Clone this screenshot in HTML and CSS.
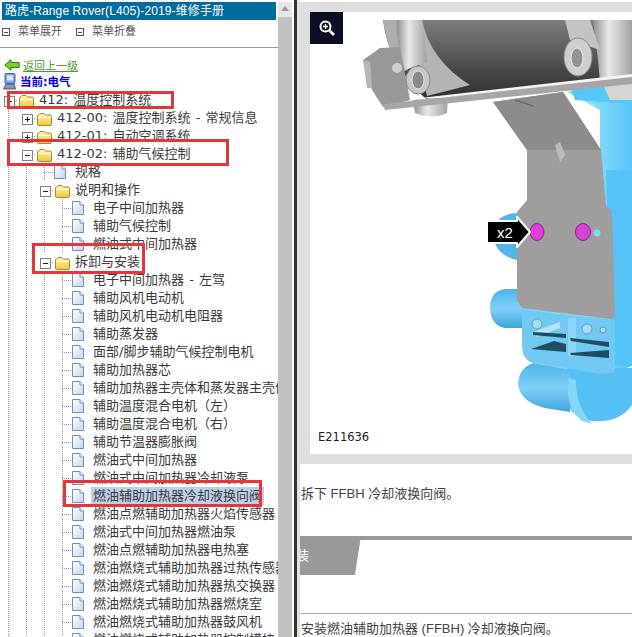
FILE: index.html
```html
<!DOCTYPE html>
<html lang="en">

<head>
    <meta charset="UTF-8">
    <title>路虎-Range Rover(L405)-2019-维修手册</title>
    <link rel="stylesheet" href="styles.css">
</head>

<body>
    <!-- Shared tree icons -->
    <svg class="defs" width="0" height="0">
        <defs>
            <linearGradient id="folderFill" x1="0" y1="0" x2="0" y2="1">
                <stop offset="0" stop-color="#fff6b8" />
                <stop offset="1" stop-color="#f2c63c" />
            </linearGradient>
            <linearGradient id="pageFill" x1="0" y1="0" x2="1" y2="1">
                <stop offset="0" stop-color="#ffffff" />
                <stop offset="1" stop-color="#c4d6f2" />
            </linearGradient>
            <symbol id="folder" viewBox="0 0 16 14">
                <path d="M1.5 12.5 V4 Q1.5 3 2.5 3 L4 1.5 H8 L9.5 3 H14 Q15.5 3 15.5 4.5 V12 Q15.5 13.5 14 13.5 H2.5 Q1.5 13.5 1.5 12.5 Z" fill="url(#folderFill)" stroke="#a88a2a" />
                <path d="M2 5.5 H15" stroke="#fffbe0" fill="none" />
            </symbol>
            <symbol id="page" viewBox="0 0 12 14">
                <path d="M.5 .5 H8 L11.5 4 V13.5 H.5 Z" fill="url(#pageFill)" stroke="#6f8fc4" />
                <path d="M8 .5 V4 H11.5" fill="#fff" stroke="#6f8fc4" />
            </symbol>
        </defs>
    </svg>

    <div class="layout">
        <!-- Left menu -->
        <div class="sidebar">
            <div class="title">路虎-Range Rover(L405)-2019-维修手册</div>
            <div class="menu-tools">
                <span class="tool"><i class="tool-icon"></i>菜单展开</span>
                <span class="tool"><i class="tool-icon"></i>菜单折叠</span>
            </div>
            <div class="back">
                <svg class="back-icon" width="16" height="12" viewBox="0 0 16 12">
                    <path d="M.8 6 L7 .8 V3.5 H15.2 V8.5 H7 V11.2 Z" fill="#7ed321" stroke="#2f7d12" />
                </svg>
                <a href="#">返回上一级</a>
            </div>
            <div class="current">
                <svg class="current-icon" width="13" height="17" viewBox="0 0 13 17">
                    <rect x="2" y="0.5" width="10" height="10" rx="1" fill="#7fa6e8" stroke="#3c62b0" />
                    <rect x="4" y="2.5" width="6" height="5" fill="#dbe9ff" />
                    <path d="M0.5 16 L3 11 H11 L12.5 16 Z" fill="#8d97ad" stroke="#4e5870" />
                </svg>
                当前:电气
            </div>

            <div class="tree">
                <div class="row lv0"><i class="tog plus"></i><svg class="ico"><use href="#folder" /></svg><span class="lbl">412: 温度控制系统</span></div>
                <div class="row lv1"><i class="tog plus"></i><svg class="ico"><use href="#folder" /></svg><span class="lbl">412-00: 温度控制系统 - 常规信息</span></div>
                <div class="row lv1"><i class="tog plus"></i><svg class="ico"><use href="#folder" /></svg><span class="lbl">412-01: 自动空调系统</span></div>
                <div class="row lv1"><i class="tog"></i><svg class="ico"><use href="#folder" /></svg><span class="lbl">412-02: 辅助气候控制</span></div>
                <div class="row lv2"><i class="join"></i><svg class="ico doc"><use href="#page" /></svg><span class="lbl">规格</span></div>
                <div class="row lv2"><i class="tog"></i><svg class="ico"><use href="#folder" /></svg><span class="lbl">说明和操作</span></div>
                <div class="row lv3"><i class="join"></i><svg class="ico doc"><use href="#page" /></svg><span class="lbl">电子中间加热器</span></div>
                <div class="row lv3"><i class="join"></i><svg class="ico doc"><use href="#page" /></svg><span class="lbl">辅助气候控制</span></div>
                <div class="row lv3"><i class="join"></i><svg class="ico doc"><use href="#page" /></svg><span class="lbl">燃油式中间加热器</span></div>
                <div class="row lv2"><i class="tog"></i><svg class="ico"><use href="#folder" /></svg><span class="lbl">拆卸与安装</span></div>
                <div class="row lv3"><i class="join"></i><svg class="ico doc"><use href="#page" /></svg><span class="lbl">电子中间加热器 - 左驾</span></div>
                <div class="row lv3"><i class="join"></i><svg class="ico doc"><use href="#page" /></svg><span class="lbl">辅助风机电动机</span></div>
                <div class="row lv3"><i class="join"></i><svg class="ico doc"><use href="#page" /></svg><span class="lbl">辅助风机电动机电阻器</span></div>
                <div class="row lv3"><i class="join"></i><svg class="ico doc"><use href="#page" /></svg><span class="lbl">辅助蒸发器</span></div>
                <div class="row lv3"><i class="join"></i><svg class="ico doc"><use href="#page" /></svg><span class="lbl">面部/脚步辅助气候控制电机</span></div>
                <div class="row lv3"><i class="join"></i><svg class="ico doc"><use href="#page" /></svg><span class="lbl">辅助加热器芯</span></div>
                <div class="row lv3"><i class="join"></i><svg class="ico doc"><use href="#page" /></svg><span class="lbl">辅助加热器主壳体和蒸发器主壳体</span></div>
                <div class="row lv3"><i class="join"></i><svg class="ico doc"><use href="#page" /></svg><span class="lbl">辅助温度混合电机（左）</span></div>
                <div class="row lv3"><i class="join"></i><svg class="ico doc"><use href="#page" /></svg><span class="lbl">辅助温度混合电机（右）</span></div>
                <div class="row lv3"><i class="join"></i><svg class="ico doc"><use href="#page" /></svg><span class="lbl">辅助节温器膨胀阀</span></div>
                <div class="row lv3"><i class="join"></i><svg class="ico doc"><use href="#page" /></svg><span class="lbl">燃油式中间加热器</span></div>
                <div class="row lv3"><i class="join"></i><svg class="ico doc"><use href="#page" /></svg><span class="lbl">燃油式中间加热器冷却液泵</span></div>
                <div class="row lv3"><i class="join"></i><svg class="ico doc"><use href="#page" /></svg><span class="lbl selected">燃油辅助加热器冷却液换向阀</span></div>
                <div class="row lv3"><i class="join"></i><svg class="ico doc"><use href="#page" /></svg><span class="lbl">燃油点燃辅助加热器火焰传感器</span></div>
                <div class="row lv3"><i class="join"></i><svg class="ico doc"><use href="#page" /></svg><span class="lbl">燃油式中间加热器燃油泵</span></div>
                <div class="row lv3"><i class="join"></i><svg class="ico doc"><use href="#page" /></svg><span class="lbl">燃油点燃辅助加热器电热塞</span></div>
                <div class="row lv3"><i class="join"></i><svg class="ico doc"><use href="#page" /></svg><span class="lbl">燃油燃烧式辅助加热器过热传感器</span></div>
                <div class="row lv3"><i class="join"></i><svg class="ico doc"><use href="#page" /></svg><span class="lbl">燃油燃烧式辅助加热器热交换器</span></div>
                <div class="row lv3"><i class="join"></i><svg class="ico doc"><use href="#page" /></svg><span class="lbl">燃油燃烧式辅助加热器燃烧室</span></div>
                <div class="row lv3"><i class="join"></i><svg class="ico doc"><use href="#page" /></svg><span class="lbl">燃油燃烧式辅助加热器鼓风机</span></div>
                <div class="row lv3"><i class="join"></i><svg class="ico doc"><use href="#page" /></svg><span class="lbl">燃油燃烧式辅助加热器控制模块</span></div>
            </div>

            <!-- Red annotation boxes drawn over the tree -->
            <div class="mark mark-root"></div>
            <div class="mark mark-group"></div>
            <div class="mark mark-remove"></div>
            <div class="mark mark-item"></div>
        </div>

        <!-- Sidebar scrollbar and frame divider -->
        <div class="scrollbar">
            <div class="scroll-up"></div>
            <div class="scroll-track"></div>
        </div>
        <div class="divider"></div>

        <!-- Main content -->
        <div class="content">
            <div class="figure">
                <div class="figure-inner">
                    <svg class="diagram" width="322" height="442" viewBox="310 12 322 442">
                        <defs>
                            <linearGradient id="drum" x1="0" y1="0" x2="0" y2="1">
                                <stop offset="0" stop-color="#7f7d7c" />
                                <stop offset="0.6" stop-color="#4b4a49" />
                                <stop offset="1" stop-color="#2f2e2e" />
                            </linearGradient>
                            <linearGradient id="silver" x1="0" y1="0" x2="1" y2="0">
                                <stop offset="0" stop-color="#8f8e8d" />
                                <stop offset="0.4" stop-color="#e9e9e8" />
                                <stop offset="1" stop-color="#a3a2a1" />
                            </linearGradient>
                            <linearGradient id="blueBody" x1="0" y1="0" x2="1" y2="0">
                                <stop offset="0" stop-color="#70d0f8" />
                                <stop offset="0.6" stop-color="#8fe0fc" />
                                <stop offset="1" stop-color="#58c4f8" />
                            </linearGradient>
                            <linearGradient id="bluePipe" x1="0" y1="0" x2="0" y2="1">
                                <stop offset="0" stop-color="#4db4ea" />
                                <stop offset="0.5" stop-color="#7fd0f6" />
                                <stop offset="1" stop-color="#3ea4dc" />
                            </linearGradient>
                        </defs>

                        <!-- blue unit behind the bracket -->
                        <path d="M567 92 L632 78 V366 L600 378 L530 362 L522 345 V300 H600 V110 Z" fill="url(#blueBody)" />
                        <path d="M570 86 L632 80 V104 L575 100 Z" fill="#55c8f8" />
                        <path d="M606 170 H632 V366 H612 Z" fill="#55c2f8" />
                        <path d="M517 213 Q496 214 492 232 Q494 255 517 260 Z" fill="#53b6ea" />
                        <path d="M522 289 H505 Q490 291 490 308 Q491 326 505 328 H522 Z" fill="url(#bluePipe)" />
                        <path d="M567 368 H632 V405 Q620 423 592 421 Q570 418 566 398 Z" fill="#55c0f4" />
                        <path d="M533 363 L570 370 V412 L545 408 Q520 402 518 384 Q519 368 533 363 Z" fill="url(#bluePipe)" />
                        <path d="M569 378 Q564 408 582 421 L592 424 Q575 405 576 380 Z" fill="#86d6f8" />

                        <!-- housing and slots -->
                        <path d="M522 310 L615 320 V372 L600 374 L530 362 Q522 358 522 345 Z" fill="#71c9f2" />
                        <path d="M568 318 H576 V356 H568 Z" fill="#8ed6f6" />
                        <path d="M533 332 L560 322 V328 L537 337 Z" fill="#b9e4f7" />
                        <circle cx="537" cy="324" r="5" fill="#a8dcf4" stroke="#5c9fc2" />
                        <circle cx="587" cy="329" r="5" fill="#a8dcf4" stroke="#5c9fc2" />
                        <circle cx="603" cy="330" r="3" fill="#a8dcf4" stroke="#5c9fc2" />
                        <path d="M533 332 L566 334 V338 L533 335 Z" fill="#1f4d66" />
                        <path d="M570 338 L609 342 V347 L571 341 Z" fill="#1f4d66" />
                        <path d="M531 349 L554 341 L566 344 V352 Z" fill="#1f4d66" />
                        <path d="M570 353 L609 350 V358 L571 355 Z" fill="#1f4d66" />

                        <!-- drum and silver castings -->
                        <path d="M383 20 H632 V78 L427 100 Q388 65 383 20 Z" fill="url(#drum)" />
                        <path d="M383 20 H400 L408 70 L400 72 Q388 50 383 20 Z" fill="#aeadac" />
                        <path d="M422 20 Q430 60 470 85 L427 96 L418 60 Z" fill="#b5b4b3" />
                        <path d="M397 20 H422 L427 62 L405 70 Q395 40 397 20 Z" fill="url(#silver)" />
                        <path d="M593 20 H632 V78 L600 82 L598 60 Z" fill="url(#silver)" />
                        <path d="M565 20 H590 L600 50 L570 40 Z" fill="#c4c3c2" />
                        <path d="M602 82 H632 V100 H610 Z" fill="#d6d5d4" />
                        <path d="M413 100 L448 96 L447 113 Q432 120 415 113 Z" fill="url(#silver)" />

                        <!-- flat flange -->
                        <path d="M363 60 L380 48 L400 47 L410 100 L383 107 L372 90 Z" fill="#9a9896" />
                        <path d="M363 60 L370 62 L372 88 L367 88 Z" fill="#b8b6b4" />
                        <circle cx="397" cy="68" r="5" fill="#cfcecd" />
                        <path d="M383 104 L632 76 V84 L385 110 Z" fill="#a8a6a4" />
                        <path d="M420 98 L632 74 V77 L440 98 Z" fill="#f4f4f4" />

                        <!-- bosses -->
                        <ellipse cx="418" cy="80" rx="12" ry="14" fill="#c8c7c6" stroke="#8a8988" />
                        <ellipse cx="418" cy="80" rx="6" ry="9" fill="#8a8988" stroke="#e6e6e6" />
                        <ellipse cx="578" cy="57" rx="14" ry="19" fill="#cfcecd" stroke="#8a8988" />
                        <ellipse cx="577" cy="58" rx="6" ry="10" fill="#939291" stroke="#eeeeee" />

                        <!-- bracket -->
                        <path d="M493 102 L563 92 L601 150 L606 205 L612 212 L615 317 L610 319 L522 308 L517 300 V212 L527 200 V150 Z" fill="#a09e9c" />
                        <path d="M493 102 L563 92 L601 150 L527 150 Z" fill="#8e8c8a" />
                        <path d="M555 145 L560 142 L565 155 L560 162 Z" fill="#bdbbb9" />
                        <path d="M515 100 L533 106" stroke="#5b5a59" stroke-width="1" />

                        <!-- bolts -->
                        <ellipse cx="537" cy="232" rx="7" ry="8.5" fill="#d940d4" stroke="#7d2a7c" />
                        <ellipse cx="583" cy="232" rx="7.5" ry="8.5" fill="#d940d4" stroke="#7d2a7c" />
                        <circle cx="597" cy="233" r="3.5" fill="#7fd8ee" />

                        <!-- callout -->
                        <path d="M487 221 H517 V217 L530 232 L517 247 V243 H487 Z" fill="#000" stroke="#fff" stroke-width="2" stroke-linejoin="round" />
                        <text class="callout-text" x="497" y="238">x2</text>

                        <text class="figure-code" x="318" y="441">E211636</text>
                    </svg>
                    <div class="zoom-btn">
                        <svg width="16" height="16" viewBox="0 0 16 16">
                            <circle cx="6.5" cy="6.5" r="5" fill="none" stroke="#fff" stroke-width="2" />
                            <path d="M10.5 10.5 L15 15" stroke="#fff" stroke-width="2.6" />
                            <path d="M4 6.5 H9 M6.5 4 V9" stroke="#fff" stroke-width="1.3" />
                        </svg>
                    </div>
                </div>
            </div>

            <p class="step step-remove">拆下 FFBH 冷却液换向阀。</p>

            <div class="section-head">
                <div class="section-tab"><span>安装</span></div>
            </div>

            <p class="step step-install">安装燃油辅助加热器 (FFBH) 冷却液换向阀。</p>
        </div>
    </div>
</body>

</html>
```

FILE: styles.css
```css
/* Reset & Fonts */
* {
    margin: 0;
    padding: 0;
    box-sizing: border-box;
}

html,
body {
    height: 100%;
    overflow: hidden;
}

body {
    background-color: #fff;
    color: #3a3a3a;
    font-family: "DejaVu Sans", "Noto Sans CJK SC", sans-serif;
    font-size: 13px;
}

.defs {
    position: absolute;
}

.layout {
    display: flex;
    height: 637px;
}

/* Sidebar */
.sidebar {
    position: relative;
    width: 278px;
    height: 637px;
    padding-top: 2px;
    overflow: hidden;
    flex-shrink: 0;
}

.title {
    width: 274px;
    height: 18px;
    margin-left: 2px;
    padding-left: 3px;
    background-color: #006b9c;
    color: #fff;
    font-family: "Liberation Sans", "Noto Sans CJK SC", sans-serif;
    font-size: 12px;
    letter-spacing: 0.1px;
    line-height: 18px;
    white-space: nowrap;
}

.menu-tools {
    display: flex;
    gap: 14px;
    height: 28px;
    padding: 3px 0 0 2px;
    border-bottom: 1px solid #999;
    font-size: 11px;
    line-height: 18px;
    color: #555;
}

.tool {
    display: flex;
    align-items: center;
    height: 18px;
}

.tool-icon {
    width: 8px;
    height: 8px;
    margin-right: 8px;
    border: 1px solid #555;
    background: linear-gradient(#555, #555) center / 4px 1px no-repeat;
}

.back {
    display: flex;
    align-items: center;
    height: 17px;
    margin-top: 8px;
    padding-left: 4px;
    font-size: 11px;
}

.back-icon {
    margin-right: 3px;
}

.back a {
    color: #4a9a2c;
}

.current {
    display: flex;
    align-items: center;
    height: 16px;
    padding-left: 3px;
    color: #0000e0;
    font-size: 11.5px;
    font-weight: bold;
}

.current-icon {
    margin-right: 4px;
}

/* Tree */
.tree {
    margin: 2px 0 0 -1px;
}

.row {
    display: flex;
    align-items: center;
    height: 18px;
    white-space: nowrap;
    word-spacing: 1px;
    --dots: repeating-linear-gradient(to bottom, #9a9a9a 0 1px, transparent 1px 2px);
    background-image: var(--dots), var(--dots), var(--dots);
    background-size: 1px 100%;
    background-repeat: no-repeat;
}

.lv0 {
    background-image: none;
}

.lv1 {
    padding-left: 18px;
    background-position: 9px 0, -9px 0, -9px 0;
}

.lv2 {
    padding-left: 36px;
    background-position: 9px 0, 27px 0, -9px 0;
}

.lv3 {
    padding-left: 54px;
    background-position: 9px 0, 27px 0, 45px 0;
}

.tog,
.join {
    position: relative;
    width: 18px;
    height: 18px;
    flex-shrink: 0;
    background-image: repeating-linear-gradient(to right, #9a9a9a 0 1px, transparent 1px 2px);
    background-size: 9px 1px;
    background-position: 9px 9px;
    background-repeat: no-repeat;
}

.join::before {
    content: "";
    position: absolute;
    left: 9px;
    top: 0;
    width: 1px;
    height: 18px;
    background: repeating-linear-gradient(to bottom, #9a9a9a 0 1px, transparent 1px 2px);
}

/* Expand / collapse box */
.tog::before {
    content: "";
    position: absolute;
    left: 5px;
    top: 5px;
    width: 9px;
    height: 9px;
    border: 1px solid #808080;
    background: linear-gradient(#222, #222) center / 5px 1px no-repeat, #fff;
}

.tog.plus::before {
    background: linear-gradient(#222, #222) center / 5px 1px no-repeat,
        linear-gradient(#222, #222) center / 1px 5px no-repeat, #fff;
}

.ico {
    width: 16px;
    height: 14px;
    margin: 2px 1px 0;
    flex-shrink: 0;
}

.ico.doc {
    width: 12px;
    height: 14px;
    margin: 0 2px 0 1px;
}

.row .ico.doc + .lbl {
    margin-left: 7px;
}

.lbl {
    margin-left: 4px;
    line-height: 18px;
}

.row .ico.doc + .lbl.selected {
    margin-left: 5px;
    padding: 0 2px;
    background-color: #bccfea;
}

/* Red annotation boxes */
.mark {
    position: absolute;
    border: 3px solid #e2383c;
}

.mark-root {
    left: 7px;
    top: 91px;
    width: 167px;
    height: 18px;
}

.mark-group {
    left: 7px;
    top: 139px;
    width: 222px;
    height: 27px;
}

.mark-remove {
    left: 32px;
    top: 243px;
    width: 113px;
    height: 31px;
}

.mark-item {
    left: 63px;
    top: 480px;
    width: 199px;
    height: 27px;
}

/* Scrollbar and divider */
.scrollbar {
    width: 14px;
    flex-shrink: 0;
    display: flex;
    flex-direction: column;
    padding-top: 2px;
}

.scroll-up {
    position: relative;
    height: 15px;
    background-color: #e6e6e6;
}

.scroll-up::before {
    content: "";
    position: absolute;
    left: 3px;
    top: 4px;
    border-left: 4px solid transparent;
    border-right: 4px solid transparent;
    border-bottom: 5px solid #999;
}

.scroll-track {
    flex: 1;
    background-color: #c2c2c2;
}

.divider {
    width: 6px;
    margin-left: 2px;
    flex-shrink: 0;
    border-left: 3px solid #333;
    background-color: #e2e2e2;
}

/* Main content */
.content {
    flex: 1;
    min-width: 0;
    padding-top: 2px;
    overflow: hidden;
    position: relative;
}

.figure {
    height: 462px;
    padding: 10px 0 10px 10px;
    background-color: #dedede;
}

.figure-inner {
    position: relative;
    height: 442px;
    background-color: #fff;
}

.diagram {
    display: block;
}

.callout-text {
    fill: #fff;
    font-family: "Liberation Sans", sans-serif;
    font-size: 15px;
}

.figure-code {
    fill: #222;
    font-family: "DejaVu Sans", sans-serif;
    font-size: 11.5px;
}

.zoom-btn {
    position: absolute;
    left: 0;
    top: 0;
    width: 33px;
    height: 32px;
    display: flex;
    align-items: center;
    justify-content: center;
    background-color: #0b0f24;
}

.step {
    line-height: 18px;
    white-space: nowrap;
    padding-left: 1px;
    color: #444;
    font-family: "Liberation Sans", "Noto Sans CJK SC", sans-serif;
}

.step-remove {
    margin-top: 21px;
}

.section-head {
    position: relative;
    height: 78px;
    margin-top: 33px;
    border-top: 4px solid #999;
    border-bottom: 1px solid #aaa;
}

.section-tab {
    width: 61px;
    height: 39px;
    margin-top: -4px;
    background-color: #999;
    clip-path: polygon(0 0, 100% 0, 90% 100%, 0 100%);
    overflow: hidden;
}

.section-tab span {
    display: block;
    margin-left: -17px;
    color: #fff;
    line-height: 39px;
    white-space: nowrap;
}

.step-install {
    margin-top: 6px;
}
```
